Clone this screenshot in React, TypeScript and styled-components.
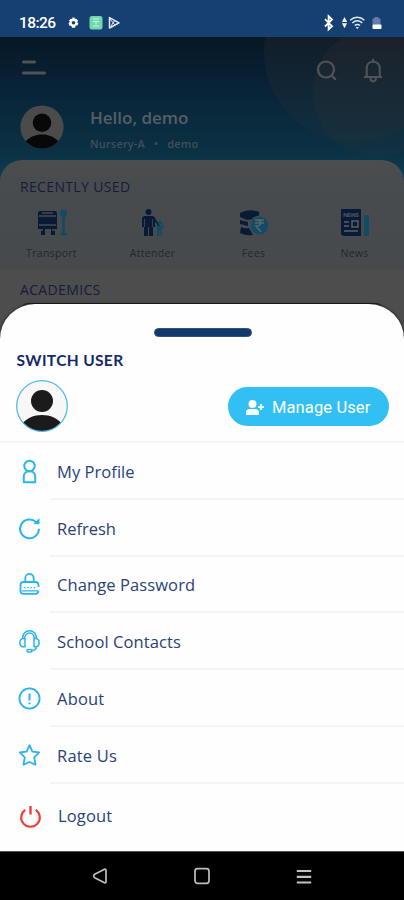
import React from "react";
import styled, { createGlobalStyle } from "styled-components";

const Global = createGlobalStyle`
  * { box-sizing: border-box; }
  body { margin: 0; background: #000; }
  svg { display: block; flex: none; overflow: visible; }
`;

const Phone = styled.main`
  position: relative;
  width: 404px;
  height: 900px;
  overflow: hidden;
  display: flex;
  flex-direction: column;
  font-family: "Open Sans", "Noto Sans", sans-serif;
`;

const StatusBar = styled.header`
  height: 37px;
  flex: none;
  background: #174072;
  display: flex;
  justify-content: space-between;
  padding: 10px 22px 0 19px;
  color: #fff;
`;
const StatusGroup = styled.div<{ $gap: number }>`
  display: flex;
  align-items: center;
  gap: ${(p) => p.$gap}px;
  height: 26px;
`;
const Clock = styled.span`
  font: 500 15.5px/20px Roboto, sans-serif;
  letter-spacing: -0.55px;
  width: 37px;
  white-space: nowrap;
`;

const Home = styled.section`
  height: 300px;
  flex: none;
  position: relative;
  overflow: hidden;
  background: linear-gradient(#071726 0, #092438 55px, #0b3143 115px, #0c4058 145px);
`;
const Bubble = styled.div<{ $x: number; $y: number; $size: number }>`
  position: absolute;
  left: ${(p) => p.$x}px;
  top: ${(p) => p.$y}px;
  width: ${(p) => p.$size}px;
  height: ${(p) => p.$size}px;
  border-radius: 50%;
  background: linear-gradient(rgba(52, 48, 48, 0.24) 45%, rgba(52, 56, 56, 0.13));
`;
const HomeTop = styled.div`
  position: relative;
  height: 64px;
  display: flex;
  justify-content: space-between;
  padding: 20px 21px 0 22px;
`;
const TopActions = styled.div`
  display: flex;
  gap: 26px;
`;
const Greeting = styled.div`
  position: relative;
  height: 59px;
  display: flex;
  padding: 4px 20px 0;
  gap: 26px;
`;
const GreetingText = styled.div`
  display: flex;
  flex-direction: column;
  color: #555f66;
  padding-top: 1px;
`;
const Hello = styled.div`
  font: 600 17px/24px "Open Sans", sans-serif;
  white-space: nowrap;
`;
const ClassLine = styled.div`
  display: flex;
  gap: 9px;
  font: 600 11px/18px "Open Sans", sans-serif;
  letter-spacing: 0.17px;
  color: #3f4f58;
  margin-top: 5px;
  white-space: nowrap;
`;
const HomeCard = styled.div`
  position: relative;
  height: 200px;
  border-radius: 22px 22px 0 0;
  background: linear-gradient(#4b4d4e 0, #474b4e 40px, #474a4d 108px, #4d4d4d 112px);
`;
const CardTitle = styled.h2`
  margin: 0;
  padding: 17px 20px 0;
  height: 43px;
  font: 500 14px/20px "Open Sans", sans-serif;
  letter-spacing: 0.35px;
  color: #151c3c;
  white-space: nowrap;
`;
const Shortcuts = styled.div`
  display: grid;
  grid-template-columns: repeat(4, 101px);
  padding-left: 1px;
  height: 60px;
`;
const Shortcut = styled.div`
  display: flex;
  flex-direction: column;
  align-items: center;
  padding-top: 6px;
  gap: 9px;
  font: 400 10.5px/15px "Open Sans", sans-serif;
  letter-spacing: 0.3px;
  color: #24272c;
`;
const AcademicsBox = styled.div`
  margin: -3px 20px 0;
  height: 40px;
  border: 1px solid #222;
  border-radius: 8px;
`;

const Sheet = styled.section`
  position: absolute;
  left: 0;
  top: 304px;
  width: 404px;
  height: 547px;
  border-radius: 35px 35px 0 0;
  background: #fefefe;
  box-shadow: 0 0 3px rgba(0, 0, 0, 0.75);
  display: flex;
  flex-direction: column;
`;
const Grip = styled.div`
  width: 98px;
  height: 9px;
  border-radius: 5px;
  background: #113a6a;
  border: 1px solid #32527c;
  margin: 24px auto 0;
  position: relative;
  left: 1px;
  flex: none;
`;
const SheetTitle = styled.h1`
  margin: 13px 0 0 16.500px;
  font: 700 15.5px/20px Lato, sans-serif;
  letter-spacing: 0.35px;
  color: #15296b;
  height: 20px;
  white-space: nowrap;
`;
const UserRow = styled.div`
  height: 73px;
  flex: none;
  display: flex;
  justify-content: space-between;
  padding: 10px 15px 0 16px;
  border-bottom: 2px solid #f4f4f4;
`;
const ManageButton = styled.button`
  width: 161px;
  height: 39px;
  margin-top: 7px;
  padding: 2px 0 0 18px;
  border: 0;
  border-radius: 20px;
  background: #31bff4;
  color: #fff;
  display: flex;
  align-items: center;
  gap: 8px;
  font: 400 16.5px/20px Roboto, sans-serif;
  letter-spacing: 0.12px;
  white-space: nowrap;
`;
const MenuRow = styled.div<{ $last?: boolean }>`
  display: flex;
  align-items: center;
  height: ${(p) => (p.$last ? 66 : 56.8)}px;
  padding-left: ${(p) => (p.$last ? 20 : 19)}px;
  flex: none;
`;
const MenuLabel = styled.div<{ $last?: boolean; $track: number }>`
  flex: 1;
  align-self: stretch;
  display: flex;
  align-items: center;
  margin-left: ${(p) => (p.$last ? 8 : 9)}px;
  padding: ${(p) => (p.$last ? "0 0 1px 8px" : "3px 0 0 7px")};
  border-bottom: ${(p) => (p.$last ? "0" : "2px solid #f4f4f5")};
  font: 400 16.5px/24px "Open Sans", sans-serif;
  letter-spacing: ${(p) => p.$track}px;
  color: #29427a;
  white-space: nowrap;
`;
const NavBar = styled.nav`
  position: absolute;
  left: 0;
  right: 0;
  bottom: 0;
  height: 49px;
  border-top: 1px solid #555;
  background: #000;
  display: flex;
  justify-content: center;
  align-items: center;
  gap: 86px;
`;

function Avatar({ size, bg, fg, ring }: { size: number; bg: string; fg: string; ring?: string }) {
  const id = `avatar-${size}`;
  return (
    <svg width={size} height={size} viewBox="0 0 52 52">
      <clipPath id={id}><circle cx="26" cy="26" r="25.5" /></clipPath>
      <circle cx="26" cy="26" r="25.5" fill={bg} />
      <g clipPath={`url(#${id})`} fill={fg}>
        <circle cx="26" cy="21" r="11" />
        <path d="M4 46C10 38 18 35 26 35s16 3 22 11v6H4Z" />
      </g>
      {ring && <circle cx="26" cy="26" r="25.3" fill="none" stroke={ring} strokeWidth="1.3" />}
    </svg>
  );
}

const icons: Record<string, React.ReactNode> = {
  profile: <g strokeWidth="2"><circle cx="10.500" cy="6" r="5.200" /><path d="M4.800 22.200v-6c0-6.600 11.400-6.600 11.400 0v6Z" /></g>,
  refresh: <g strokeWidth="2"><path d="M19.900 11.800a9.400 9.400 0 1 1-3-6.800l2 1.500" /><path d="M20.200 1.500v5.300h-5.300Z" fill="#29adeb" strokeWidth=".5" /></g>,
  password: <g><path d="M6.300 9V5a4.200 4.200 0 0 1 8.400 0v4M19.500 14v-2.100q0-2.900-2.900-2.900H4.400q-2.900 0-2.900 2.900V18q0 2.900 2.900 2.900h12.200q2.500 0 2.900-2.700" /><path d="M5 14.700h1.500M8.200 14.700h1.500M11.400 14.700h1.500M14.600 14.700h1.500M3 17.900h16.500" strokeWidth="1.300" /></g>,
  contacts: <g strokeWidth="1.500"><path d="M3.500 8.500C3.500 3.700 6.600.8 10.500.8s7 2.900 7 7.700M5.700 8.500C5.700 5.200 7.800 3 10.500 3s4.800 2.200 4.800 5.500" /><path d="M6 8.500v8.300H4.400C-.3 16.700-.3 8.800 4.400 8.500ZM15 8.500v8.300h1.600c4.700-.1 4.700-8 0-8.300ZM17.600 16.800c-.4 2.500-2 3.600-5 3.800" /><rect x="8" y="19.500" width="5" height="2.400" rx="1.100" /></g>,
  about: <g><circle cx="10.500" cy="11.500" r="10.100" /><path d="M10.500 6.500v7M10.500 15.500v1.700" strokeWidth="2" strokeLinecap="butt" /></g>,
  rate: <path d="m10.500 1.200 2.900 6.400 6.800.8-5 4.900 1.300 7.400-6-2.700-6 2.700 1.300-7.400-5-4.900 6.800-.8Z" />,
  logout: <g stroke="#ef3c3c" strokeWidth="2.100"><path d="M5.300 4.800a9.300 9.300 0 1 0 10.400 0" /><path d="M10.500 1v8.500" strokeWidth="2.400" /></g>,
};

const menu = [
  { icon: "profile", label: "My Profile", track: 0.05 },
  { icon: "refresh", label: "Refresh", track: 0 },
  { icon: "password", label: "Change Password", track: 0.1 },
  { icon: "contacts", label: "School Contacts", track: 0.1 },
  { icon: "about", label: "About", track: 0.2 },
  { icon: "rate", label: "Rate Us", track: 0.2 },
  { icon: "logout", label: "Logout", track: 0.15 },
];

function MenuIcon({ name }: { name: string }) {
  return (
    <svg width="22" height="23" viewBox="0 0 22 23" fill="none" stroke="#29b4ed" strokeWidth="1.800" strokeLinejoin="round">
      {icons[name]}
    </svg>
  );
}

const navy = "#091a37";
const teal = "#124b64";
const shortcuts = [
  {
    label: "Transport",
    art: <g><path d="M3 2h15q2 0 2 3v15H1V5q0-3 2-3Z" fill={navy} /><path d="M5 4h11M2 7h17M2 16h17" stroke="#474b4e" strokeWidth="1.300" /><path d="M4 20h4v6H4ZM14 20h4v6h-4Z" fill={navy} /><path d="M3 21h3M15 21h3" stroke="#474b4e" strokeWidth="1.500" /><circle cx="26.500" cy="4.500" r="3.700" fill={teal} /><path d="M26.500 7v17M23.500 25h7" stroke={teal} strokeWidth="2.500" /></g>,
  },
  {
    label: "Attender",
    art: <g><circle cx="10.500" cy="3" r="3" fill={navy} /><path d="M7 7h7q3 0 3 3v8h-2v9h-4v-9h-1v9H6v-9H4v-8q0-3 3-3Z" fill={navy} /><path d="M6.500 10v8M14.500 10v8" stroke="#474b4e" strokeWidth=".8" /><path d="m16 9 5 8" stroke={navy} strokeWidth="1.500" /><circle cx="22" cy="14" r="2.200" fill={teal} /><path d="M20 17h4l2-2v2l-2 3v7h-1.600v-5h-1v5H19v-8l-2-3Z" fill={teal} /></g>,
  },
  {
    label: "Fees",
    art: <g><path d="M1 4Q10-1 20 3v6L8 11 1 8ZM1 11l8 2v4l-8-2ZM2 18l8 1 4 7Q7 27 1 24Z" fill={navy} /><path d="M1 10q4 2 9 2M1 17q4 2 8 2" stroke="#474b4e" strokeWidth="1.200" fill="none" /><circle cx="20.500" cy="16.500" r="10" fill="#474b4e" /><circle cx="20.500" cy="16.500" r="8.800" fill={teal} /><path d="M16 11h9M16 14h9M17 11c7 0 6 6 0 6l5 6" stroke="#57666d" strokeWidth="1.500" fill="none" /></g>,
  },
  {
    label: "News",
    art: <g><path d="M1 0h20v27H4q-3 0-3-3Z" fill={navy} /><text x="3" y="7.500" fontSize="6" fontFamily="Open Sans" fontWeight="700" fill="#525960" textLength="16">NEWS</text><path d="M4 13h5M4 17h5M4 22h14M12 12h6v6h-6Z" stroke="#5a6066" strokeWidth="1.500" fill="none" /><path d="M24 6h5v21h-5Z" fill={teal} /></g>,
  },
];

export default function App() {
  return (
    <Phone>
      <Global />
      <StatusBar>
        <StatusGroup $gap={12}>
          <Clock>18:26</Clock>
          <svg width="11" height="12" viewBox="0 0 11 12"><path d="M4.500.5h2l.4 1.600 1.400-.4 1.800 2-.9 1.500 1.200 1-1 2.400-1.700-.1-.7 2.300h-3l-.7-2-1.800-.1-1-2.400 1.300-1.200L1 3.600l1.800-1.900 1.300.4Z" fill="#fff" /><circle cx="5.500" cy="5.800" r="1.800" fill="#174072" /></svg>
          <svg width="43" height="14" viewBox="6 0 43 14"><rect x="1" y="0" width="13" height="13.500" rx="2.500" transform="translate(3.500 0)" fill="#70d8ad" /><path d="M8 3h6M8 5.500h6M11 5.500v3M8 10h6" stroke="#c9f4df" strokeWidth="1.200" /><path d="m24.500 1.600 9.500 5.200-9.500 5.200Z" fill="none" stroke="#e5eaff" strokeWidth="1.500" strokeLinejoin="round" /><path d="m25 3 5 6M30 4l-4 6" stroke="#e5eaff" /></svg>
        </StatusGroup>
        <StatusGroup $gap={0}>
          <svg width="59" height="16" viewBox="0 0 59 16" fill="none">
            <path d="m2 4.200 7 7-3.400 3.200V1.200L9 4.500l-7 7" stroke="#fff" strokeWidth="1.800" />
            <path d="m21.500 2 2.600 5h-5.200ZM18.900 8.300h5.200l-2.600 5Z" fill="#fff" />
            <path d="M27.200 5.200c4.200-3.800 10-3.800 14.200 0M29.300 8c3-2.600 7-2.600 10 0M31.700 10.500c1.700-1.300 3.700-1.300 5.400 0" stroke="#dfe7f4" strokeWidth="1.500" /><path d="m32.800 12 1.500 2.200 1.500-2.200Z" fill="#dfe7f4" />
            <path d="M49.500 3.500h2V2h4v1.500h2V10h-8Z" fill="#637fa9" /><rect x="49.500" y="9.500" width="9" height="4.500" rx="1" fill="#fff" />
          </svg>
        </StatusGroup>
      </StatusBar>

      <Home>
        <Bubble $x={264} $y={-75} $size={180} />
        <Bubble $x={313} $y={-10} $size={130} />
        <HomeTop>
          <svg width="25" height="22" viewBox="0 0 25 22"><path d="M1.500 5h11M1.500 16h21" stroke="#4b535b" strokeWidth="3" strokeLinecap="round" /></svg>
          <TopActions>
            <svg width="22" height="24" viewBox="0 0 22 24" fill="none" stroke="#505459" strokeWidth="2.200"><circle cx="11" cy="12.500" r="8" /><path d="m16.500 18.500 4.300 4.300" /></svg>
            <svg width="20" height="26" viewBox="0 0 20 26" fill="none" stroke="#505459" strokeWidth="2"><path d="M1 20h18M3.700 19v-8c0-8.500 13-8.500 13 0v8M10.200 4.500V1.800M7.500 21c0 4.500 5.400 4.500 5.400 0" /></svg>
          </TopActions>
        </HomeTop>
        <Greeting>
          <Avatar size={44} bg="#4b4b4b" fg="#080808" />
          <GreetingText>
            <Hello>Hello, demo</Hello>
            <ClassLine><span>Nursery-A</span><span>•</span><span>demo</span></ClassLine>
          </GreetingText>
        </Greeting>
        <HomeCard>
          <CardTitle>RECENTLY USED</CardTitle>
          <Shortcuts>
            {shortcuts.map((s) => (
              <Shortcut key={s.label}>
                <svg width="30" height="28" viewBox="0 0 30 28">{s.art}</svg>
                {s.label}
              </Shortcut>
            ))}
          </Shortcuts>
          <CardTitle>ACADEMICS</CardTitle>
          <AcademicsBox />
        </HomeCard>
      </Home>

      <Sheet>
        <Grip />
        <SheetTitle>SWITCH USER</SheetTitle>
        <UserRow>
          <Avatar size={52} bg="#f7f7f7" fg="#1b1b1b" ring="#54b9ec" />
          <ManageButton>
            <svg width="18" height="15" viewBox="0 0 18 15" fill="#fff"><circle cx="6.500" cy="4" r="4" /><path d="M0 15v-2.500Q0 9 4 9h5q4 0 4 3.500V15ZM14.200 4h1.700v2.200H18v1.700h-2.100V10h-1.700V7.900H12V6.200h2.200Z" /></svg>
            Manage User
          </ManageButton>
        </UserRow>
        {menu.map((m) => {
          const last = m.icon === "logout";
          return (
            <MenuRow key={m.icon} $last={last}>
              <MenuIcon name={m.icon} />
              <MenuLabel $last={last} $track={m.track}>{m.label}</MenuLabel>
            </MenuRow>
          );
        })}
      </Sheet>

      <NavBar>
        <svg width="16" height="18" viewBox="0 0 16 18" fill="none" stroke="#bebebe" strokeWidth="1.700"><path d="M1.700 9q0-1 1-1.700L12 2.500q2-1 2 1v11q0 2-2 1L2.700 10.700q-1-.7-1-1.700Z" /></svg>
        <svg width="16" height="18" viewBox="0 0 16 18" fill="none" stroke="#bebebe" strokeWidth="1.700"><rect x="1" y="1.700" width="14" height="14.600" rx="2.500" /></svg>
        <svg width="16" height="18" viewBox="0 0 16 18"><path d="M.8 4h14.400M.8 9.800h14.400M.8 15.500h14.400" stroke="#c2c2c2" strokeWidth="2.200" /></svg>
      </NavBar>
    </Phone>
  );
}
